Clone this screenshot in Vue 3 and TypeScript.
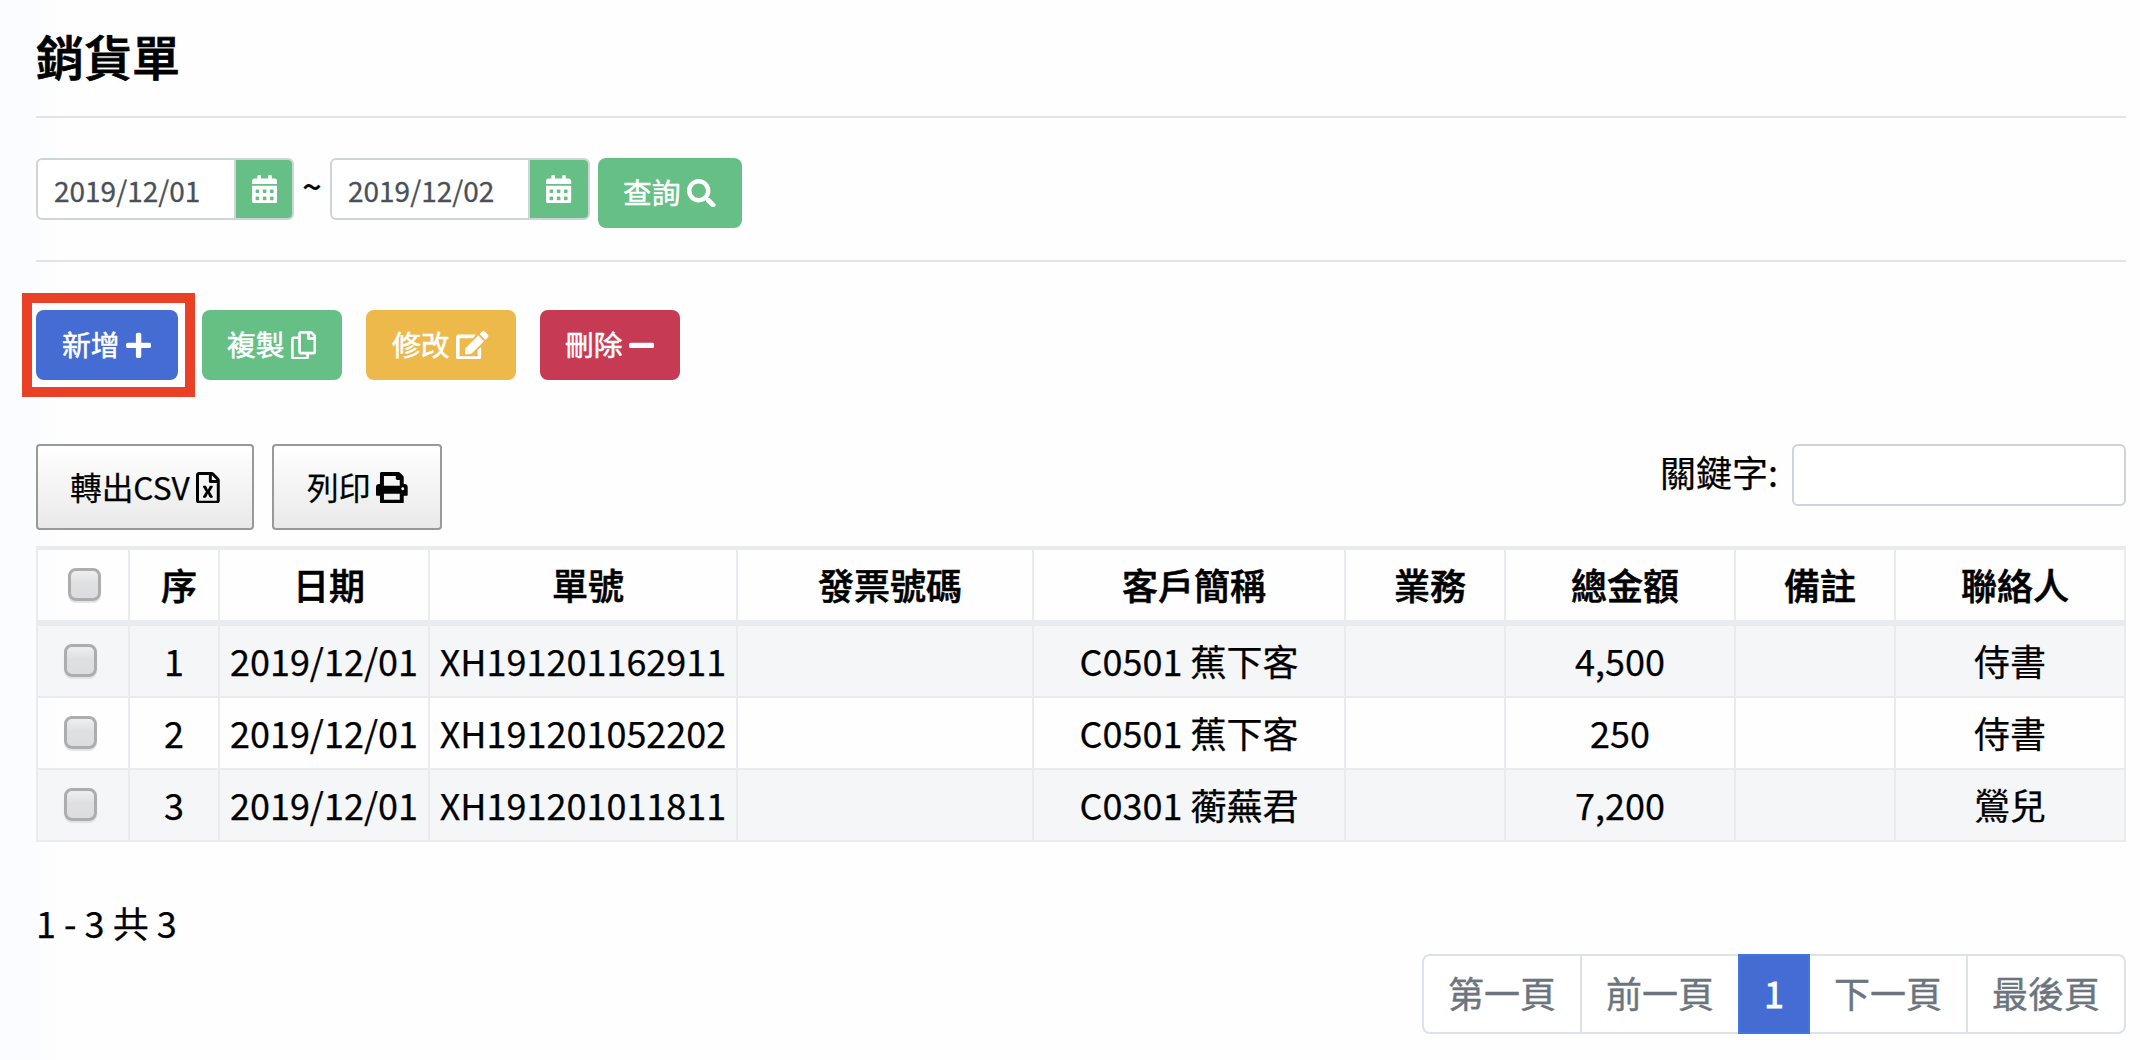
<script setup lang="ts">
import { ref } from 'vue'

interface Icon { w: number; d: string }
interface Order {
  no: number
  date: string
  code: string
  invoice: string
  customer: string
  sales: string
  total: string
  note: string
  contact: string
}

const icons: Record<string, Icon> = {
  calendar: { w: 448, d: 'M0 464c0 26.500 21.500 48 48 48h352c26.500 0 48-21.500 48-48V192H0v272zm320-196c0-6.600 5.400-12 12-12h40c6.600 0 12 5.400 12 12v40c0 6.600-5.400 12-12 12h-40c-6.600 0-12-5.400-12-12v-40zm0 128c0-6.600 5.400-12 12-12h40c6.600 0 12 5.400 12 12v40c0 6.600-5.400 12-12 12h-40c-6.600 0-12-5.400-12-12v-40zM192 268c0-6.600 5.400-12 12-12h40c6.600 0 12 5.400 12 12v40c0 6.600-5.400 12-12 12h-40c-6.600 0-12-5.400-12-12v-40zm0 128c0-6.600 5.400-12 12-12h40c6.600 0 12 5.400 12 12v40c0 6.600-5.400 12-12 12h-40c-6.600 0-12-5.400-12-12v-40zM64 268c0-6.600 5.400-12 12-12h40c6.600 0 12 5.400 12 12v40c0 6.600-5.400 12-12 12H76c-6.600 0-12-5.400-12-12v-40zm0 128c0-6.600 5.400-12 12-12h40c6.600 0 12 5.400 12 12v40c0 6.600-5.400 12-12 12H76c-6.600 0-12-5.400-12-12v-40zM400 64h-48V16c0-8.800-7.200-16-16-16h-32c-8.800 0-16 7.200-16 16v48H160V16c0-8.800-7.200-16-16-16h-32c-8.800 0-16 7.200-16 16v48H48C21.500 64 0 85.500 0 112v48h448v-48c0-26.500-21.500-48-48-48z' },
  search: { w: 512, d: 'M505 442.700L405.300 343c-4.500-4.500-10.600-7-17-7H372c27.600-35.300 44-79.700 44-128C416 93.100 322.900 0 208 0S0 93.100 0 208s93.100 208 208 208c48.300 0 92.700-16.400 128-44v16.300c0 6.400 2.500 12.500 7 17l99.700 99.700c9.400 9.400 24.600 9.400 33.900 0l28.300-28.300c9.400-9.400 9.400-24.600.1-34zM208 336c-70.700 0-128-57.200-128-128 0-70.700 57.200-128 128-128 70.700 0 128 57.200 128 128 0 70.700-57.200 128-128 128z' },
  plus: { w: 448, d: 'M416 208H272V64c0-17.670-14.330-32-32-32h-32c-17.670 0-32 14.330-32 32v144H32c-17.670 0-32 14.330-32 32v32c0 17.670 14.330 32 32 32h144v144c0 17.670 14.330 32 32 32h32c17.670 0 32-14.330 32-32V304h144c17.670 0 32-14.330 32-32v-32c0-17.670-14.330-32-32-32z' },
  minus: { w: 448, d: 'M416 208H32c-17.670 0-32 14.330-32 32v32c0 17.670 14.330 32 32 32h384c17.670 0 32-14.330 32-32v-32c0-17.670-14.330-32-32-32z' },
  copy: { w: 448, d: 'M433.941 65.941l-51.882-51.882A48 48 0 0 0 348.118 0H176c-26.510 0-48 21.490-48 48v48H48c-26.510 0-48 21.490-48 48v320c0 26.510 21.490 48 48 48h224c26.510 0 48-21.490 48-48v-48h80c26.510 0 48-21.490 48-48V99.882a48 48 0 0 0-14.059-33.941zM266 464H54a6 6 0 0 1-6-6V150a6 6 0 0 1 6-6h74v224c0 26.510 21.490 48 48 48h96v42a6 6 0 0 1-6 6zm128-96H182a6 6 0 0 1-6-6V54a6 6 0 0 1 6-6h106v88c0 13.255 10.745 24 24 24h88v202a6 6 0 0 1-6 6zm6-256h-64V48h9.632c1.591 0 3.117.632 4.243 1.757l48.368 48.368a6 6 0 0 1 1.757 4.243V112z' },
  edit: { w: 576, d: 'M402.600 83.200l90.200 90.200c3.800 3.800 3.800 10 0 13.800L274.400 405.600l-92.800 10.300c-12.400 1.400-22.900-9.100-21.500-21.500l10.300-92.800L388.800 83.200c3.800-3.800 10-3.800 13.800 0zm162-22.900l-48.800-48.800c-15.200-15.200-39.900-15.200-55.200 0l-35.400 35.400c-3.800 3.800-3.800 10 0 13.800l90.200 90.200c3.800 3.800 10 3.800 13.800 0l35.400-35.400c15.200-15.300 15.200-40 0-55.200zM384 346.200V448H64V128h229.800c3.200 0 6.200-1.300 8.500-3.500l40-40c7.600-7.600 2.200-20.500-8.500-20.500H48C21.500 64 0 85.500 0 112v352c0 26.500 21.500 48 48 48h352c26.500 0 48-21.500 48-48V306.200c0-10.700-12.900-16-20.500-8.500l-40 40c-2.200 2.300-3.500 5.300-3.500 8.500z' },
  excel: { w: 384, d: 'M369.900 97.900L286 14C277 5 264.800-.1 252.100-.1H48C21.500 0 0 21.500 0 48v416c0 26.500 21.500 48 48 48h288c26.500 0 48-21.500 48-48V131.900c0-12.700-5.100-25-14.100-34zM332.100 128H256V51.900l76.100 76.100zM48 464V48h160v104c0 13.300 10.700 24 24 24h104v288H48zm212-240h-28.800c-4.400 0-8.400 2.400-10.500 6.300-18 33.100-22.200 42.400-28.600 57.700-13.900-29.100-6.900-17.300-28.600-57.700-2.100-3.900-6.200-6.300-10.600-6.300H124c-9.300 0-15 10-10.400 18l46.300 78-46.300 78c-4.700 8 1.100 18 10.400 18h28.900c4.400 0 8.400-2.400 10.500-6.300 21.700-40 23-45 28.600-57.700 14.900 30.200 5.900 15.900 28.600 57.700 2.100 3.900 6.200 6.300 10.600 6.300H260c9.300 0 15-10 10.400-18L224 320c.7-1.100 30.300-50.500 46.300-78 4.700-8-1.100-18-10.300-18z' },
  print: { w: 512, d: 'M464 192h-16V81.941a24 24 0 0 0-7.029-16.970L383.029 7.029A24 24 0 0 0 366.059 0H88C74.745 0 64 10.745 64 24v168H48c-26.510 0-48 21.490-48 48v132c0 6.627 5.373 12 12 12h52v104c0 13.255 10.745 24 24 24h336c13.255 0 24-10.745 24-24V384h52c6.627 0 12-5.373 12-12V240c0-26.510-21.490-48-48-48zm-80 256H128v-96h256v96zM128 224V64h192v40c0 13.200 10.800 24 24 24h40v96H128zm304 72c-13.254 0-24-10.746-24-24s10.746-24 24-24 24 10.746 24 24-10.746 24-24 24z' },
}

const dateFrom = ref('2019/12/01')
const dateTo = ref('2019/12/02')
const keyword = ref('')

const actions = [
  { label: '新增', icon: 'plus', kind: 'add' },
  { label: '複製', icon: 'copy', kind: 'copy' },
  { label: '修改', icon: 'edit', kind: 'edit' },
  { label: '刪除', icon: 'minus', kind: 'delete' },
]
const exportsList = [
  { label: '轉出CSV', icon: 'excel', kind: 'csv' },
  { label: '列印', icon: 'print', kind: 'print' },
]
const columns = ['序', '日期', '單號', '發票號碼', '客戶簡稱', '業務', '總金額', '備註', '聯絡人']
const widths = [92, 90, 210, 308, 296, 312, 160, 230, 160, 232]
const orders: Order[] = [
  { no: 1, date: '2019/12/01', code: 'XH191201162911', invoice: '', customer: 'C0501 蕉下客', sales: '', total: '4,500', note: '', contact: '侍書' },
  { no: 2, date: '2019/12/01', code: 'XH191201052202', invoice: '', customer: 'C0501 蕉下客', sales: '', total: '250', note: '', contact: '侍書' },
  { no: 3, date: '2019/12/01', code: 'XH191201011811', invoice: '', customer: 'C0301 蘅蕪君', sales: '', total: '7,200', note: '', contact: '鶯兒' },
]
const pages = ['第一頁', '前一頁', '1', '下一頁', '最後頁']
</script>

<template>
  <main class="page">
    <h1>銷貨單</h1>

    <section class="filter">
      <div class="date">
        <input v-model="dateFrom" type="text" />
        <span class="addon"><svg class="icon" :viewBox="`0 0 ${icons.calendar.w} 512`"><path :d="icons.calendar.d" /></svg></span>
      </div>
      <span class="tilde">~</span>
      <div class="date second">
        <input v-model="dateTo" type="text" />
        <span class="addon"><svg class="icon" :viewBox="`0 0 ${icons.calendar.w} 512`"><path :d="icons.calendar.d" /></svg></span>
      </div>
      <button class="btn query"><span>查詢</span><svg class="icon" :viewBox="`0 0 ${icons.search.w} 512`"><path :d="icons.search.d" /></svg></button>
    </section>

    <section class="actions">
      <button v-for="a in actions" :key="a.kind" class="btn" :class="a.kind">
        <span>{{ a.label }}</span>
        <svg class="icon" :viewBox="`0 0 ${icons[a.icon].w} 512`"><path :d="icons[a.icon].d" /></svg>
      </button>
    </section>

    <section class="tools">
      <button v-for="e in exportsList" :key="e.kind" class="tool" :class="e.kind">
        <span>{{ e.label }}</span>
        <svg class="icon" :viewBox="`0 0 ${icons[e.icon].w} 512`"><path :d="icons[e.icon].d" /></svg>
      </button>
      <label class="keyword"><span>關鍵字:</span><input v-model="keyword" type="text" /></label>
    </section>

    <table>
      <colgroup><col v-for="(w, i) in widths" :key="i" :style="{ width: w + 'px' }" /></colgroup>
      <thead>
        <tr>
          <th><i class="check"></i></th>
          <th v-for="c in columns" :key="c">{{ c }}</th>
        </tr>
      </thead>
      <tbody>
        <tr v-for="o in orders" :key="o.no">
          <td class="pick"><i class="check"></i></td>
          <td>{{ o.no }}</td>
          <td>{{ o.date }}</td>
          <td>{{ o.code }}</td>
          <td>{{ o.invoice }}</td>
          <td>{{ o.customer }}</td>
          <td>{{ o.sales }}</td>
          <td>{{ o.total }}</td>
          <td>{{ o.note }}</td>
          <td>{{ o.contact }}</td>
        </tr>
      </tbody>
    </table>

    <p class="info">1 - 3 共 3</p>
    <nav class="pager">
      <a v-for="p in pages" :key="p" :class="{ active: p === '1' }">{{ p }}</a>
    </nav>
  </main>
</template>

<style>
body {
  margin: 0;
  background: #fefefe;
}
</style>

<style scoped>
.page {
  box-sizing: border-box;
  width: 2140px;
  height: 1060px;
  padding: 0 14px 0 36px;
  overflow: hidden;
  background: linear-gradient(90deg, #fafcff 0, #fcfdff 58px, #fefefe 59px);
  color: #000;
  font-family: "Noto Sans CJK TC", sans-serif;
  font-size: 36px;
  -webkit-text-stroke: 0.25px currentColor;
}
.page *, .page *::after { box-sizing: border-box; }
button, input { font-family: inherit; margin: 0; }

h1 {
  margin: 0;
  height: 118px;
  padding-top: 19px;
  border-bottom: 2px solid #e2e3e5;
  font-size: 48px;
  font-weight: 500;
  line-height: 72px;
  -webkit-text-stroke-width: 0.8px;
}
.icon {
  display: block;
  flex: none;
  height: 1em;
  fill: currentColor;
}

.filter {
  display: flex;
  align-items: flex-start;
  height: 144px;
  padding-top: 40px;
  border-bottom: 2px solid #e2e3e5;
}
.date {
  display: flex;
  width: 258px;
  height: 62px;
  overflow: hidden;
  border: 2px solid #ced4da;
  border-radius: 6px;
  background: #fff;
}
.date.second { width: 260px; }
.date input {
  flex: 1;
  min-width: 0;
  padding: 1px 0 0 16px;
  border: 0;
  outline: 0;
  background: none;
  color: #495057;
  font-size: 28px;
  -webkit-text-stroke: 0.3px #495057;
}
.addon {
  display: flex;
  align-items: center;
  justify-content: center;
  width: 58px;
  padding-left: 1px;
  border-left: 2px solid #ced4da;
  background: #66c086;
  color: #fff;
  font-size: 28.8px;
}
.second .addon { width: 60px; padding: 0; }
.tilde {
  width: 36px;
  font-size: 34px;
  font-weight: 500;
  line-height: 55px;
  text-align: center;
  -webkit-text-stroke-width: 0.2px;
}

.btn {
  position: relative;
  display: flex;
  align-items: center;
  gap: 6.5px;
  height: 70px;
  padding: 0 0 0 26px;
  border: 0;
  border-radius: 8px;
  background: #66c086;
  color: #fff;
  font-size: 28.8px;
}
.btn span { margin-top: -3px; -webkit-text-stroke: 0.5px #fff; }
.btn.query { width: 144px; margin-left: 8px; padding-left: 25px; }

.actions {
  display: flex;
  gap: 24px;
  height: 182px;
  padding-top: 48px;
}
.btn.add { width: 142px; background: #456cd2; }
/* highlight frame around the create button */
.btn.add::after {
  content: "";
  position: absolute;
  top: -17px;
  left: -14px;
  width: 173px;
  height: 104px;
  border: 10px solid #ea4025;
}
.btn.copy { width: 140px; padding-left: 25px; }
.btn.edit { width: 150px; background: #eeb94b; }
.btn.delete { width: 140px; padding-left: 25px; background: #c73a54; }

.tools {
  display: flex;
  align-items: flex-start;
  height: 102px;
}
.tool {
  display: flex;
  align-items: center;
  gap: 6px;
  height: 86px;
  padding: 0 0 0 32px;
  border: 2px solid #999;
  border-radius: 4px;
  background: linear-gradient(#fff, #e9e9e9);
  color: #000;
  font-size: 31.68px;
}
.tool span { margin-top: -2px; }
.tool .icon { margin-top: 1px; }
.tool.csv { width: 218px; margin-right: 18px; }
.tool.print { width: 170px; padding-left: 33px; }
.keyword {
  display: flex;
  align-items: flex-start;
  margin-left: auto;
  line-height: 55px;
}
.keyword input {
  width: 334px;
  height: 62px;
  margin-left: 14px;
  border: 2px solid #ced4da;
  border-radius: 6px;
  background: #fff;
}

table {
  width: 2090px;
  table-layout: fixed;
  border-collapse: separate;
  border-spacing: 0;
}
th, td {
  padding: 0 0 2px;
  border-left: 2px solid #e9ebee;
  line-height: 54px;
  text-align: center;
  white-space: nowrap;
}
th:last-child, td:last-child { border-right: 2px solid #e9ebee; }
th {
  height: 80px;
  padding-left: 10px;
  border-top: 4px solid #e9ebee;
  border-bottom: 6px solid #e9ebee;
  font-weight: 500;
  -webkit-text-stroke-width: 0.6px;
}
td { height: 72px; border-bottom: 2px solid #e9ebee; }
th:first-child { padding-left: 2px; }
tbody tr:nth-child(odd) td { background: #f5f6f8; }
.check {
  display: block;
  width: 33px;
  height: 33px;
  margin: 0 auto;
  border: 3px solid #adadaf;
  border-radius: 8px;
  background: linear-gradient(#efeff0, #dedfe1 45%, #dcdddf);
  box-shadow: 0 2px 1px #e2e3e5;
}
.pick .check { margin-left: 26px; }

.info {
  margin: 0;
  height: 112px;
  padding-top: 53px;
  line-height: 54px;
}
.pager {
  display: flex;
  width: 704px;
  height: 80px;
  margin-left: auto;
  color: #6c757d;
}
.pager a {
  width: 158px;
  border: 2px solid #dee2e6;
  border-right: 0;
  background: #fff;
  line-height: 73px;
  text-align: center;
  -webkit-text-stroke: 0.4px #6c757d;
}
.pager a:first-child { border-radius: 8px 0 0 8px; }
.pager a:last-child { width: 160px; border-right: 2px solid #dee2e6; border-radius: 0 8px 8px 0; }
.pager a.active {
  width: 72px;
  border: 2px solid #3f76e0;
  background: #456cd2;
  color: #fff;
  -webkit-text-stroke: 0.8px #fff;
}
.pager a.active + a { width: 156px; border-left: 0; }
</style>
